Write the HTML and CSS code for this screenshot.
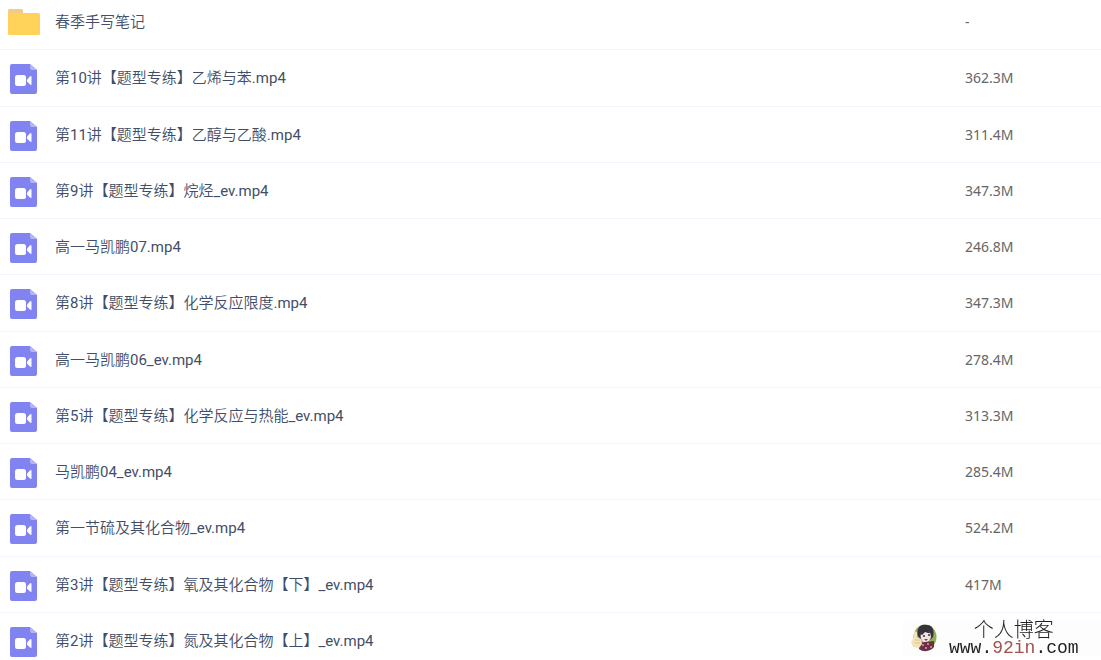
FILE: index.html
```html
<!DOCTYPE html>
<html lang="zh-CN">

<head>
    <meta charset="UTF-8">
    <meta name="viewport" content="width=device-width, initial-scale=1.0">
    <title>文件列表</title>
    <link rel="stylesheet" href="styles.css">
</head>

<body>
    <svg class="sprite" aria-hidden="true">
        <symbol id="icon-video" viewBox="0 0 27 30">
            <path d="M2 0H20L27 6V28A2 2 0 0 1 25 30H2A2 2 0 0 1 0 28V2A2 2 0 0 1 2 0Z" fill="#8183f1" />
            <path d="M20 0L27 6H22A2 2 0 0 1 20 4Z" fill="#b4b5f7" />
            <rect x="5" y="11" width="11" height="11" rx="2.500" fill="#fff" />
            <path d="M17 15.500L20 12.500Q21.500 11.500 21.500 13V20Q21.500 21.500 20 20.500L17 17.500Z" fill="#fff" />
        </symbol>
        <symbol id="icon-folder" viewBox="0 0 32 27">
            <path d="M1.500 0H13.500A1.500 1.500 0 0 1 15 1.500V8H0V1.500A1.500 1.500 0 0 1 1.500 0Z" fill="#f5c987" />
            <rect y="4" width="32" height="22" rx="1.500" fill="#ffd35a" />
        </symbol>
    </svg>

    <table class="file-list">
        <tr>
            <td class="icon"><svg class="folder"><use href="#icon-folder" /></svg></td>
            <td class="name">春季手写笔记</td>
            <td class="size">-</td>
        </tr>
        <tr>
            <td class="icon"><svg class="video"><use href="#icon-video" /></svg></td>
            <td class="name">第10讲【题型专练】乙烯与苯.mp4</td>
            <td class="size">362.3M</td>
        </tr>
        <tr>
            <td class="icon"><svg class="video"><use href="#icon-video" /></svg></td>
            <td class="name">第11讲【题型专练】乙醇与乙酸.mp4</td>
            <td class="size">311.4M</td>
        </tr>
        <tr>
            <td class="icon"><svg class="video"><use href="#icon-video" /></svg></td>
            <td class="name">第9讲【题型专练】烷烃_ev.mp4</td>
            <td class="size">347.3M</td>
        </tr>
        <tr>
            <td class="icon"><svg class="video"><use href="#icon-video" /></svg></td>
            <td class="name">高一马凯鹏07.mp4</td>
            <td class="size">246.8M</td>
        </tr>
        <tr>
            <td class="icon"><svg class="video"><use href="#icon-video" /></svg></td>
            <td class="name">第8讲【题型专练】化学反应限度.mp4</td>
            <td class="size">347.3M</td>
        </tr>
        <tr>
            <td class="icon"><svg class="video"><use href="#icon-video" /></svg></td>
            <td class="name">高一马凯鹏06_ev.mp4</td>
            <td class="size">278.4M</td>
        </tr>
        <tr>
            <td class="icon"><svg class="video"><use href="#icon-video" /></svg></td>
            <td class="name">第5讲【题型专练】化学反应与热能_ev.mp4</td>
            <td class="size">313.3M</td>
        </tr>
        <tr>
            <td class="icon"><svg class="video"><use href="#icon-video" /></svg></td>
            <td class="name">马凯鹏04_ev.mp4</td>
            <td class="size">285.4M</td>
        </tr>
        <tr>
            <td class="icon"><svg class="video"><use href="#icon-video" /></svg></td>
            <td class="name">第一节硫及其化合物_ev.mp4</td>
            <td class="size">524.2M</td>
        </tr>
        <tr>
            <td class="icon"><svg class="video"><use href="#icon-video" /></svg></td>
            <td class="name">第3讲【题型专练】氧及其化合物【下】_ev.mp4</td>
            <td class="size">417M</td>
        </tr>
        <tr>
            <td class="icon"><svg class="video"><use href="#icon-video" /></svg></td>
            <td class="name">第2讲【题型专练】氮及其化合物【上】_ev.mp4</td>
            <td class="size"></td>
        </tr>
    </table>

    <div class="watermark">
        <svg class="avatar" viewBox="0 0 26 28">
            <ellipse cx="14" cy="13" rx="11.500" ry="12.500" fill="#93ad55" />
            <path d="M7 12C5 5 9 0 15 1C21 0 24 6 22 13L19 16H10Z" fill="#34323c" />
            <path d="M10 9L14 7L19 8L20 13C19 17 16 19 13 18C10 17 9 13 10 9Z" fill="#f3e2df" />
            <path d="M9 10L14 5L20 9L17 9L14 8L11 11Z" fill="#34323c" />
            <path d="M12 12H14M17 11H19" stroke="#34323c" stroke-width="1.500" />
            <path d="M13 15H17L15 17Z" fill="#9c3445" />
            <path d="M8 19L14 18L23 17V23C20 27 13 29 8 25Z" fill="#67304f" />
            <path d="M11 21H13M16 20H18M14 24H16M19 23H21" stroke="#d07a68" stroke-width="2" />
            <path d="M3 7L6 8V13L10 15L11 20L8 24L2 23L0 18L3 13Z" fill="#f2e2ba" />
            <path d="M4 16H9M4 19H9" stroke="#dcc58c" stroke-width="1" />
        </svg>
        <div class="site">
            <span class="site-name">个人博客</span>
            <span class="site-url">www.<span class="accent">92in</span>.com</span>
        </div>
    </div>
</body>

</html>
```

FILE: styles.css
```css
body {
    margin: 0;
    background-color: #fff;
    color: #424e67;
    font-family: Roboto, "Noto Sans CJK SC DemiLight", "Noto Sans CJK SC", sans-serif;
    font-size: 15px;
    overflow: hidden;
}

.sprite {
    display: none;
}

.file-list {
    width: 100%;
    margin-top: -6px;
    border-collapse: separate;
    border-spacing: 0;
    table-layout: fixed;
}

.file-list td {
    height: 55px;
    padding: 0;
    border-bottom: 1px solid #f1f4fb;
    line-height: 20px;
    vertical-align: middle;
}

.file-list tr:nth-child(4n + 2) td {
    height: 56px;
}

.file-list .icon {
    width: 47px;
    padding-left: 8px;
}

.icon svg {
    display: block;
}

.folder {
    width: 32px;
    height: 27px;
    margin-top: 2px;
}

.video {
    width: 27px;
    height: 30px;
    margin: 2px 2px 0;
}

.file-list .size {
    width: 136px;
    color: #666;
    font-family: "Noto Sans", sans-serif;
    font-size: 14px;
}

.watermark {
    position: fixed;
    right: 0;
    bottom: 3px;
    display: flex;
    align-items: center;
    gap: 12px;
    width: 190px;
    height: 38px;
    padding-left: 8px;
    background-color: #fdfdfd;
}

.avatar {
    width: 26px;
    height: 28px;
}

.site {
    display: flex;
    flex-direction: column;
    align-items: center;
    color: #222;
}

.site-name {
    font-family: "Noto Sans CJK SC", sans-serif;
    font-size: 20px;
    font-weight: 300;
    line-height: 20px;
}

.site-url {
    font-family: "Liberation Mono", monospace;
    font-size: 18px;
    line-height: 18px;
}

.accent {
    color: #a0524c;
}
```
